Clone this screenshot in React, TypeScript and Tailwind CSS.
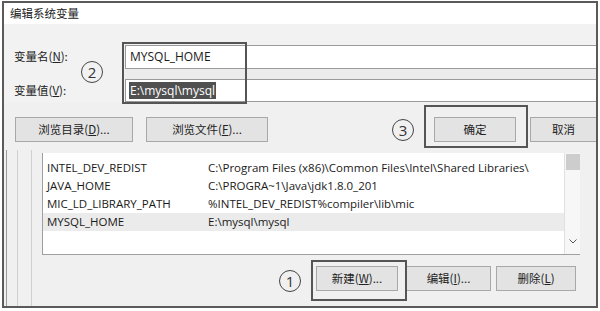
import React from "react";

const cjk = "font-['Noto_Sans_CJK_SC','Noto_Sans',sans-serif]";
const latin = "font-['Open_Sans','Noto_Sans_CJK_SC',sans-serif]";

const vars = [
  { name: "INTEL_DEV_REDIST", value: "C:\\Program Files (x86)\\Common Files\\Intel\\Shared Libraries\\" },
  { name: "JAVA_HOME", value: "C:\\PROGRA~1\\Java\\jdk1.8.0_201" },
  { name: "MIC_LD_LIBRARY_PATH", value: "%INTEL_DEV_REDIST%compiler\\lib\\mic" },
  { name: "MYSQL_HOME", value: "E:\\mysql\\mysql", selected: true },
];

// numbered annotation marks drawn on top of the screenshot
function Circled({ n, className }: { n: string; className: string }) {
  return (
    <div
      className={`absolute w-[22px] h-[22px] rounded-full border border-[#444] flex items-center justify-center text-[15px] leading-none text-[#333] ${latin} ${className}`}
    >
      {n}
    </div>
  );
}

function Btn({ children, className }: { children: React.ReactNode; className: string }) {
  return (
    <div
      className={`h-[25px] border border-[#a8a8a8] bg-[#e3e3e3] flex items-center justify-center text-[11.5px] text-[#222] ${cjk} ${className}`}
    >
      {children}
    </div>
  );
}

export default function App() {
  return (
    <div className="w-[600px] h-[311px] bg-white overflow-hidden">
      <div className="relative ml-[2px] mt-[1px] w-[596px] h-[307px] border-2 border-[#5a5a5a] flex flex-col bg-[#f4f4f4]">
        {/* title */}
        <div className={`h-[21px] bg-white pl-[6px] flex items-center text-[11.5px] text-[#222] ${cjk}`}>
          编辑系统变量
        </div>

        {/* name / value */}
        <div className="h-[79px] flex bg-[#f2f2f2]">
          <div className={`w-[121px] pt-[21px] pl-[10px] text-[11.5px] text-[#222] ${cjk}`}>
            <div className="h-[24px] flex items-center">
              变量名(<span className="underline">N</span>):
            </div>
            <div className="h-[10px]" />
            <div className="h-[23px] flex items-center">
              变量值(<span className="underline">V</span>):
            </div>
          </div>
          <div className="flex-1 pt-[21px]">
            <div className={`h-[24px] bg-white border-y border-l border-[#9a9a9a] flex items-center pl-[4px] text-[12px] text-[#1a1a1a] ${latin}`}>
              MYSQL_HOME
            </div>
            <div className="h-[10px] bg-[#ececec]" />
            <div className={`h-[23px] bg-white border-y border-l border-[#9a9a9a] flex items-center pl-[3px] text-[12px] ${latin}`}>
              <span className="bg-[#505050] text-white px-[1px] leading-[17px]">E:\mysql\mysql</span>
            </div>
          </div>
        </div>

        {/* browse / ok row */}
        <div className="h-[47px] flex items-start pt-[14px] bg-[#f0f0f0]">
          <Btn className="ml-[11px] w-[118px]">
            浏览目录(<span className="underline">D</span>)...
          </Btn>
          <Btn className="ml-[13px] w-[122px]">
            浏览文件(<span className="underline">F</span>)...
          </Btn>
          <Btn className="ml-[166px] w-[82px]">确定</Btn>
          <Btn className="ml-[14px] flex-1 border-r-0">取消</Btn>
        </div>

        {/* background list window */}
        <div className="flex-1 flex bg-[#f0f0f0]">
          <div className="w-[3px] border-r border-[#9a9a9a]" />
          <div className="w-[11px] border-r border-[#d0d0d0]" />
          <div className="w-[14px] border-r border-[#d0d0d0]" />
          <div className="w-[10px]" />
          <div className="flex-1 flex flex-col">
            <div className="h-[3px]" />
            <div className="h-[102px] flex bg-white border-l border-b border-[#a0a0a0] mr-[16px]">
              <div className={`flex-1 pt-[6px] text-[11.5px] text-[#1a1a1a] ${latin}`}>
                {vars.map((v) => (
                  <div
                    key={v.name}
                    className={`h-[18px] flex items-center ${v.selected ? "bg-[#ebebeb]" : ""}`}
                  >
                    <div className="w-[165px] pl-[4px]">{v.name}</div>
                    <div className="whitespace-nowrap">{v.value}</div>
                  </div>
                ))}
              </div>
              <div className="w-[16px] flex flex-col items-center bg-[#f7f7f7] border-l border-[#e0e0e0]">
                <div className="w-[14px] h-[16px] bg-[#cdcdcd] mt-[1px]" />
                <div className="flex-1" />
                <svg width="8" height="5" viewBox="0 0 8 5" className="mb-[10px]">
                  <path d="M0.5 0.5 L4 4 L7.5 0.5" fill="none" stroke="#555" strokeWidth="1" />
                </svg>
              </div>
            </div>
            <div className="flex-1 flex items-start pt-[11px]">
              <Btn className="ml-[274px] w-[82px]">
                新建(<span className="underline">W</span>)...
              </Btn>
              <Btn className="ml-[8px] w-[85px]">
                编辑(<span className="underline">I</span>)...
              </Btn>
              <Btn className="ml-[5px] w-[80px]">
                删除(<span className="underline">L</span>)
              </Btn>
            </div>
          </div>
        </div>

        {/* annotations */}
        <div className="absolute left-[118px] top-[39px] w-[125px] h-[62px] border-2 border-[#555]" />
        <Circled n="2" className="left-[77px] top-[58px]" />
        <div className="absolute left-[420px] top-[102px] w-[104px] h-[43px] border-2 border-[#555]" />
        <Circled n="3" className="left-[388px] top-[116px]" />
        <div className="absolute left-[307px] top-[257px] w-[96px] h-[41px] border-2 border-[#555]" />
        <Circled n="1" className="left-[275px] top-[267px]" />
      </div>
    </div>
  );
}
